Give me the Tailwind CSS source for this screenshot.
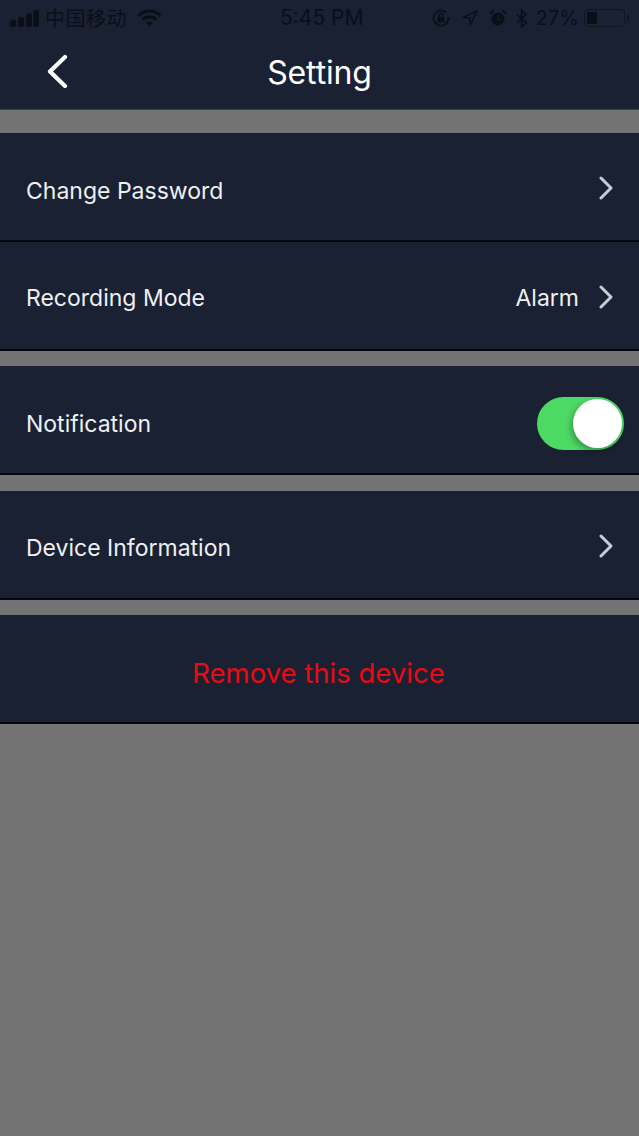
<!DOCTYPE html>
<html lang="en">
<head>
<meta charset="utf-8">
<script src="https://cdn.jsdelivr.net/npm/@tailwindcss/browser@4"></script>
<title>Setting</title>
</head>
<body class="bg-[#737373]">
<div class="w-[639px] h-[1136px] overflow-hidden bg-[#737373] font-['Inter','Noto_Sans_CJK_SC',sans-serif] text-[#eef0f2]">
  <header class="bg-[#1a2133] h-[110px] border-b border-[#3a4150]">
    <div class="h-[36px] flex items-center justify-between pl-[10px] pr-[10px] text-[#0b0e17] text-[20px] relative">
      <div class="flex items-center gap-[6px]">
        <svg width="29" height="17" viewBox="0 0 29 17" fill="#0b0e17"><rect x="0" y="10" width="6" height="7" rx="1.500"/><rect x="8" y="7" width="6" height="10" rx="1.500"/><rect x="16" y="3.500" width="6" height="13.500" rx="1.500"/><rect x="23.500" y="0" width="5.500" height="17" rx="1.500"/></svg>
        <span class="text-[20px] leading-none font-['Noto_Sans_CJK_SC'] font-normal tracking-[0.5px] w-[82px]">中国移动</span>
        <svg class="ml-[4px]" width="25" height="18" viewBox="0 0 25 18" fill="none" stroke="#0b0e17" stroke-width="3.200"><path d="M1.500 6.500C8 0.500 17 0.500 23.500 6.500"/><path d="M5.500 10.500C9.500 7 15.500 7 19.500 10.500"/><path d="M12.500 17.500L8.800 13.600C10.800 12 14.200 12 16.200 13.600Z" fill="#0b0e17" stroke="none"/></svg>
      </div>
      <span class="absolute left-[280px] top-[6px] text-[21px] leading-[24px] font-normal">5:45 PM</span>
      <div class="flex items-center">
        <svg width="20" height="20" viewBox="0 0 20 20" fill="none" stroke="#0b0e17" stroke-width="1.700" class="mr-[11px]"><path d="M17.500 10.500A7.500 7.500 0 1 1 15 4.500"/><path d="M15.500 9.500L18 12L19.800 9.500" fill="#0b0e17" stroke="none"/><rect x="6.500" y="9" width="7" height="5.500" fill="#0b0e17" stroke="none"/><path d="M8 9V7.500a2 2 0 0 1 4 0V9" stroke-width="1.300"/></svg>
        <svg width="16" height="16" viewBox="0 0 16 16" fill="none" stroke="#0b0e17" stroke-width="1.500" class="mr-[11px]"><path d="M15 1L1 7.500L8 8L8.500 15Z" stroke-linejoin="round"/></svg>
        <svg width="18" height="18" viewBox="0 0 18 18" fill="#0b0e17" class="mr-[9px]"><circle cx="9" cy="10" r="6.500"/><path d="M1 4.500L4.500 1.500M17 4.500L13.500 1.500" stroke="#0b0e17" stroke-width="2"/><path d="M9 6V10.500H12" stroke="#1a2133" stroke-width="1.200" fill="none"/></svg>
        <svg width="11" height="19" viewBox="0 0 11 19" fill="none" stroke="#0b0e17" stroke-width="1.600" class="mr-[9px]"><path d="M1 5.500L10 13.500L5.500 18V1L10 5.500L1 13.500"/></svg>
        <span class="text-[20px] leading-none mr-[5px]">27%</span>
        <div class="w-[41px] h-[18px] rounded-[4px] border border-[#0b0e17]/60 p-[2px] mr-[2px]"><div class="w-[10px] h-full bg-[#0b0e17]"></div></div>
        <div class="w-[2px] h-[6px] bg-[#0b0e17]/60"></div>
      </div>
    </div>
    <div class="relative h-[73px] flex items-center justify-center">
      <svg class="absolute left-[46px] top-[18px]" width="23" height="34" viewBox="0 0 23 34" fill="none" stroke="#ffffff" stroke-width="4.200" stroke-linecap="round" stroke-linejoin="round"><path d="M19 3L4 17.500L19 32"/></svg>
      <h1 class="text-[32px] leading-none font-normal text-white tracking-[-0.150px] mt-[1px]">Setting</h1>
    </div>
  </header>
  <div class="h-[23px]"></div>
  <a class="h-[109px] bg-[#1a2133] border-b-2 border-[#05070c] flex items-center justify-between pl-[26px] pr-[26px]">
    <span class="text-[23px] pt-[10px]">Change Password</span>
    <svg width="14" height="24" viewBox="0 0 14 24" fill="none" stroke="#c9ccd2" stroke-width="3" stroke-linecap="round" stroke-linejoin="round" class="mt-[3px]"><path d="M2 2L12 12L2 22"/></svg>
  </a>
  <a class="h-[109px] bg-[#1a2133] border-b-2 border-[#05070c] flex items-center justify-between pl-[26px] pr-[26px]">
    <span class="text-[23px] pt-[6px]">Recording Mode</span>
    <span class="flex items-center gap-[20px]"><span class="text-[23px] pt-[6px]">Alarm</span>
    <svg width="14" height="24" viewBox="0 0 14 24" fill="none" stroke="#c9ccd2" stroke-width="3" stroke-linecap="round" stroke-linejoin="round" class="mt-[2px]"><path d="M2 2L12 12L2 22"/></svg></span>
  </a>
  <div class="h-[15px]"></div>
  <div class="h-[109px] bg-[#1a2133] border-b-2 border-[#05070c] flex items-center justify-between pl-[26px] pr-[15px]">
    <span class="text-[23px] pt-[10px]">Notification</span>
    <div class="w-[87px] h-[53px] rounded-full bg-[#4cd964] flex items-center justify-end pr-[2px] mt-[8px]">
      <div class="w-[49px] h-[49px] rounded-full bg-white shadow-[-2px_3px_6px_rgba(0,0,0,0.3)]"></div>
    </div>
  </div>
  <div class="h-[16px]"></div>
  <a class="h-[109px] bg-[#1a2133] border-b-2 border-[#05070c] flex items-center justify-between pl-[26px] pr-[26px]">
    <span class="text-[23px] pt-[8px]">Device Information</span>
    <svg width="14" height="24" viewBox="0 0 14 24" fill="none" stroke="#c9ccd2" stroke-width="3" stroke-linecap="round" stroke-linejoin="round" class="mt-[3px]"><path d="M2 2L12 12L2 22"/></svg>
  </a>
  <div class="h-[15px]"></div>
  <div class="h-[109px] bg-[#1a2133] border-b-2 border-[#05070c] flex items-center justify-center">
    <span class="text-[27.500px] pt-[10px] pr-[2px] text-[#ea0a14]">Remove this device</span>
  </div>
</div>
</body>
</html>
